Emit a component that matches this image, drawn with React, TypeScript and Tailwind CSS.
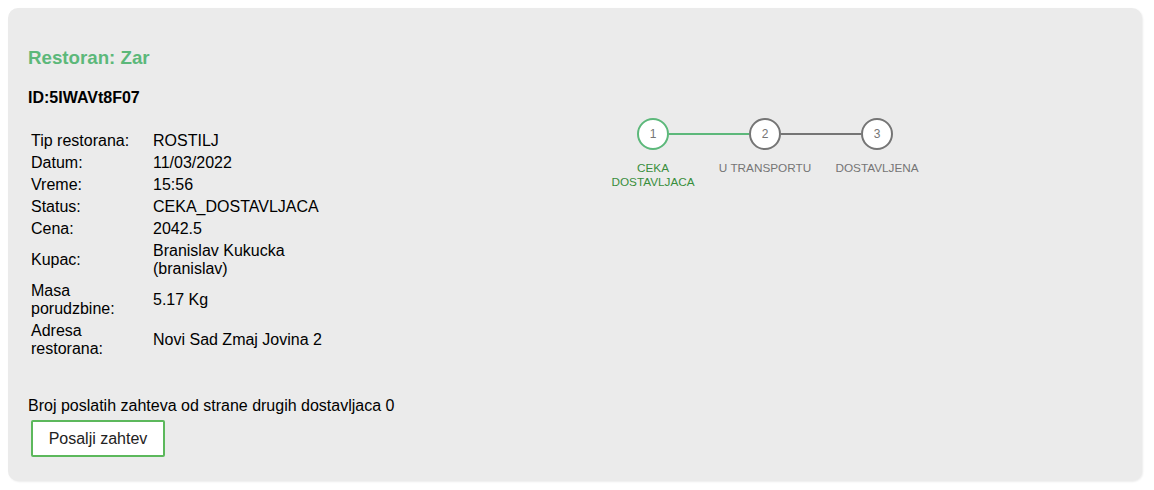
const order = {
  restoran: "Zar",
  id: "5IWAVt8F07",
  tip: "ROSTILJ",
  datum: "11/03/2022",
  vreme: "15:56",
  status: "CEKA_DOSTAVLJACA",
  cena: "2042.5",
  kupac: "Branislav Kukucka (branislav)",
  masa: "5.17 Kg",
  adresa: "Novi Sad Zmaj Jovina 2",
  zahtevi: 0,
};

const steps = ["CEKA DOSTAVLJACA", "U TRANSPORTU", "DOSTAVLJENA"];
const activeStep = 0;

const rows: [string, string][] = [
  ["Tip restorana:", order.tip],
  ["Datum:", order.datum],
  ["Vreme:", order.vreme],
  ["Status:", order.status],
  ["Cena:", order.cena],
  ["Kupac:", order.kupac],
  ["Masa porudzbine:", order.masa],
  ["Adresa restorana:", order.adresa],
];

const Stepper = () => (
  <div className="w-[336px] mt-[90px]">
    <div className="flex items-center pl-[40px]">
      {steps.map((_, i) => (
        <div key={i} className="flex items-center">
          {i > 0 && (
            <div className={`w-[80px] h-[2px] ${i === activeStep + 1 ? "bg-[#5cb87a]" : "bg-[#757575]"}`} />
          )}
          <div
            className={`w-[32px] h-[32px] rounded-full bg-white border-2 flex items-center justify-center text-[12px] text-[#757575] ${
              i === activeStep ? "border-[#5cb87a]" : "border-[#757575]"
            }`}
          >
            {i + 1}
          </div>
        </div>
      ))}
    </div>
    <div className="flex mt-[11px]">
      {steps.map((s, i) => (
        <div
          key={s}
          className={`w-[112px] px-1 text-center text-[11.75px] leading-[14px] ${
            i === activeStep ? "text-[#388e3c]" : "text-[#757575]"
          }`}
        >
          {s}
        </div>
      ))}
    </div>
  </div>
);

export default function App() {
  return (
    <div className="min-h-screen bg-white p-2 font-['Liberation_Sans',Arial,sans-serif] text-black">
      <div className="w-[1134px] rounded-[10px] bg-[#ebebeb] shadow-[1px_1px_2px_rgba(0,0,0,0.08)] px-5 pt-5 pb-[24px] flex">
        <div className="w-[569px]">
          <h3 className="mt-[18.72px] text-[18.72px] leading-[21.5px] font-bold text-[#5cb87a]">
            Restoran: {order.restoran}
          </h3>
          <h4 className="mt-[21.28px] text-base leading-[18.4px] font-bold">ID:{order.id}</h4>
          <table className="mt-[21.28px] border-separate border-spacing-[2px] text-base leading-[18px]">
            <tbody>
              {rows.map(([label, value]) => (
                <tr key={label}>
                  <td className="p-px w-[120px] align-middle">{label}</td>
                  <td className="p-px w-[172px] align-middle">{value}</td>
                </tr>
              ))}
            </tbody>
          </table>
          <p className="mt-[36px] text-base leading-[18px]">
            Broj poslatih zahteva od strane drugih dostavljaca {order.zahtevi}
          </p>
          <button className="mt-[5px] ml-[3px] w-[134px] h-[37px] bg-white border-2 border-[#5cb85c] rounded-[2px] text-base text-[#222]">
            Posalji zahtev
          </button>
        </div>
        <Stepper />
      </div>
    </div>
  );
}
